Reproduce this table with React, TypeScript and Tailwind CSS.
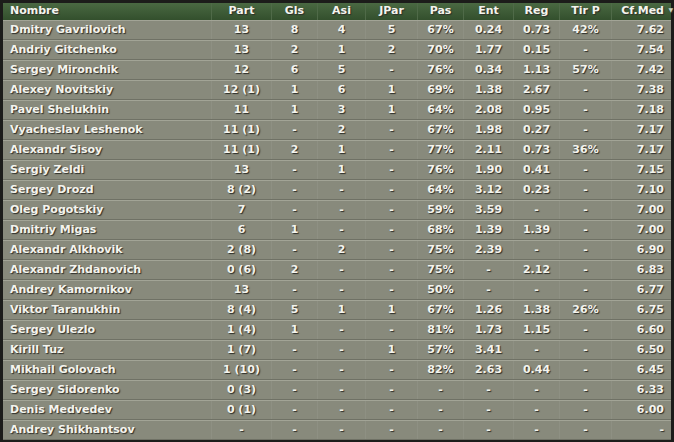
import React from "react";

const rows: string[][] = [
  ["Dmitry Gavrilovich", "13", "8", "4", "5", "67%", "0.24", "0.73", "42%", "7.62"],
  ["Andriy Gitchenko", "13", "2", "1", "2", "70%", "1.77", "0.15", "-", "7.54"],
  ["Sergey Mironchik", "12", "6", "5", "-", "76%", "0.34", "1.13", "57%", "7.42"],
  ["Alexey Novitskiy", "12 (1)", "1", "6", "1", "69%", "1.38", "2.67", "-", "7.38"],
  ["Pavel Shelukhin", "11", "1", "3", "1", "64%", "2.08", "0.95", "-", "7.18"],
  ["Vyacheslav Leshenok", "11 (1)", "-", "2", "-", "67%", "1.98", "0.27", "-", "7.17"],
  ["Alexandr Sisoy", "11 (1)", "2", "1", "-", "77%", "2.11", "0.73", "36%", "7.17"],
  ["Sergiy Zeldi", "13", "-", "1", "-", "76%", "1.90", "0.41", "-", "7.15"],
  ["Sergey Drozd", "8 (2)", "-", "-", "-", "64%", "3.12", "0.23", "-", "7.10"],
  ["Oleg Pogotskiy", "7", "-", "-", "-", "59%", "3.59", "-", "-", "7.00"],
  ["Dmitriy Migas", "6", "1", "-", "-", "68%", "1.39", "1.39", "-", "7.00"],
  ["Alexandr Alkhovik", "2 (8)", "-", "2", "-", "75%", "2.39", "-", "-", "6.90"],
  ["Alexandr Zhdanovich", "0 (6)", "2", "-", "-", "75%", "-", "2.12", "-", "6.83"],
  ["Andrey Kamornikov", "13", "-", "-", "-", "50%", "-", "-", "-", "6.77"],
  ["Viktor Taranukhin", "8 (4)", "5", "1", "1", "67%", "1.26", "1.38", "26%", "6.75"],
  ["Sergey Ulezlo", "1 (4)", "1", "-", "-", "81%", "1.73", "1.15", "-", "6.60"],
  ["Kirill Tuz", "1 (7)", "-", "-", "1", "57%", "3.41", "-", "-", "6.50"],
  ["Mikhail Golovach", "1 (10)", "-", "-", "-", "82%", "2.63", "0.44", "-", "6.45"],
  ["Sergey Sidorenko", "0 (3)", "-", "-", "-", "-", "-", "-", "-", "6.33"],
  ["Denis Medvedev", "0 (1)", "-", "-", "-", "-", "-", "-", "-", "6.00"],
  ["Andrey Shikhantsov", "-", "-", "-", "-", "-", "-", "-", "-", "-"],
];

const headers = ["Nombre", "Part", "Gls", "Asi", "JPar", "Pas", "Ent", "Reg", "Tir P", "Cf.Med"];

const grid =
  "grid grid-cols-[209px_60px_46px_48px_52px_46px_50px_46px_52px_1fr]";

function Cell({ i, children, header }: { i: number; children: React.ReactNode; header?: boolean }) {
  const align =
    i === 0 ? "justify-start pl-[7px]" : i === 9 ? "justify-end pr-[7px]" : "justify-center";
  return (
    <div
      className={`relative flex items-center ${align} ${
        i < 9 ? (header ? "border-r border-r-[#4f6a48]" : "border-r border-r-[#8e9083]") : ""
      } whitespace-nowrap`}
    >
      {children}
    </div>
  );
}

export default function App() {
  return (
    <div className="w-[674px] h-[442px] bg-[#1c1c1a] pt-[3px] pl-[3px] pr-[3px] pb-[2px] overflow-hidden">
      <div
        className="text-[#f4f4ee] text-[11px] font-bold [text-shadow:1px_1px_1px_#2e2e28]"
        style={{ fontFamily: '"DejaVu Sans", Verdana, sans-serif' }}
      >
        <div className={`${grid} h-[17px] bg-gradient-to-b from-[#4a6942] to-[#334f2d]`}>
          {headers.map((h, i) => (
            <Cell key={h} i={i} header>
              {h}
              {i === 9 && (
                <span className="absolute right-[-2px] top-[4px] text-[6px] leading-none text-[#c8d2c0]">
                  ▼
                </span>
              )}
            </Cell>
          ))}
        </div>
        {rows.map((r, ri) => (
          <div
            key={ri}
            className={`${grid} h-[20px] bg-[#888a7c] border-t border-t-[#a2a496] border-b border-b-[#6f7165]`}
          >
            {r.map((v, i) => (
              <Cell key={i} i={i}>
                {v}
              </Cell>
            ))}
          </div>
        ))}
      </div>
    </div>
  );
}
